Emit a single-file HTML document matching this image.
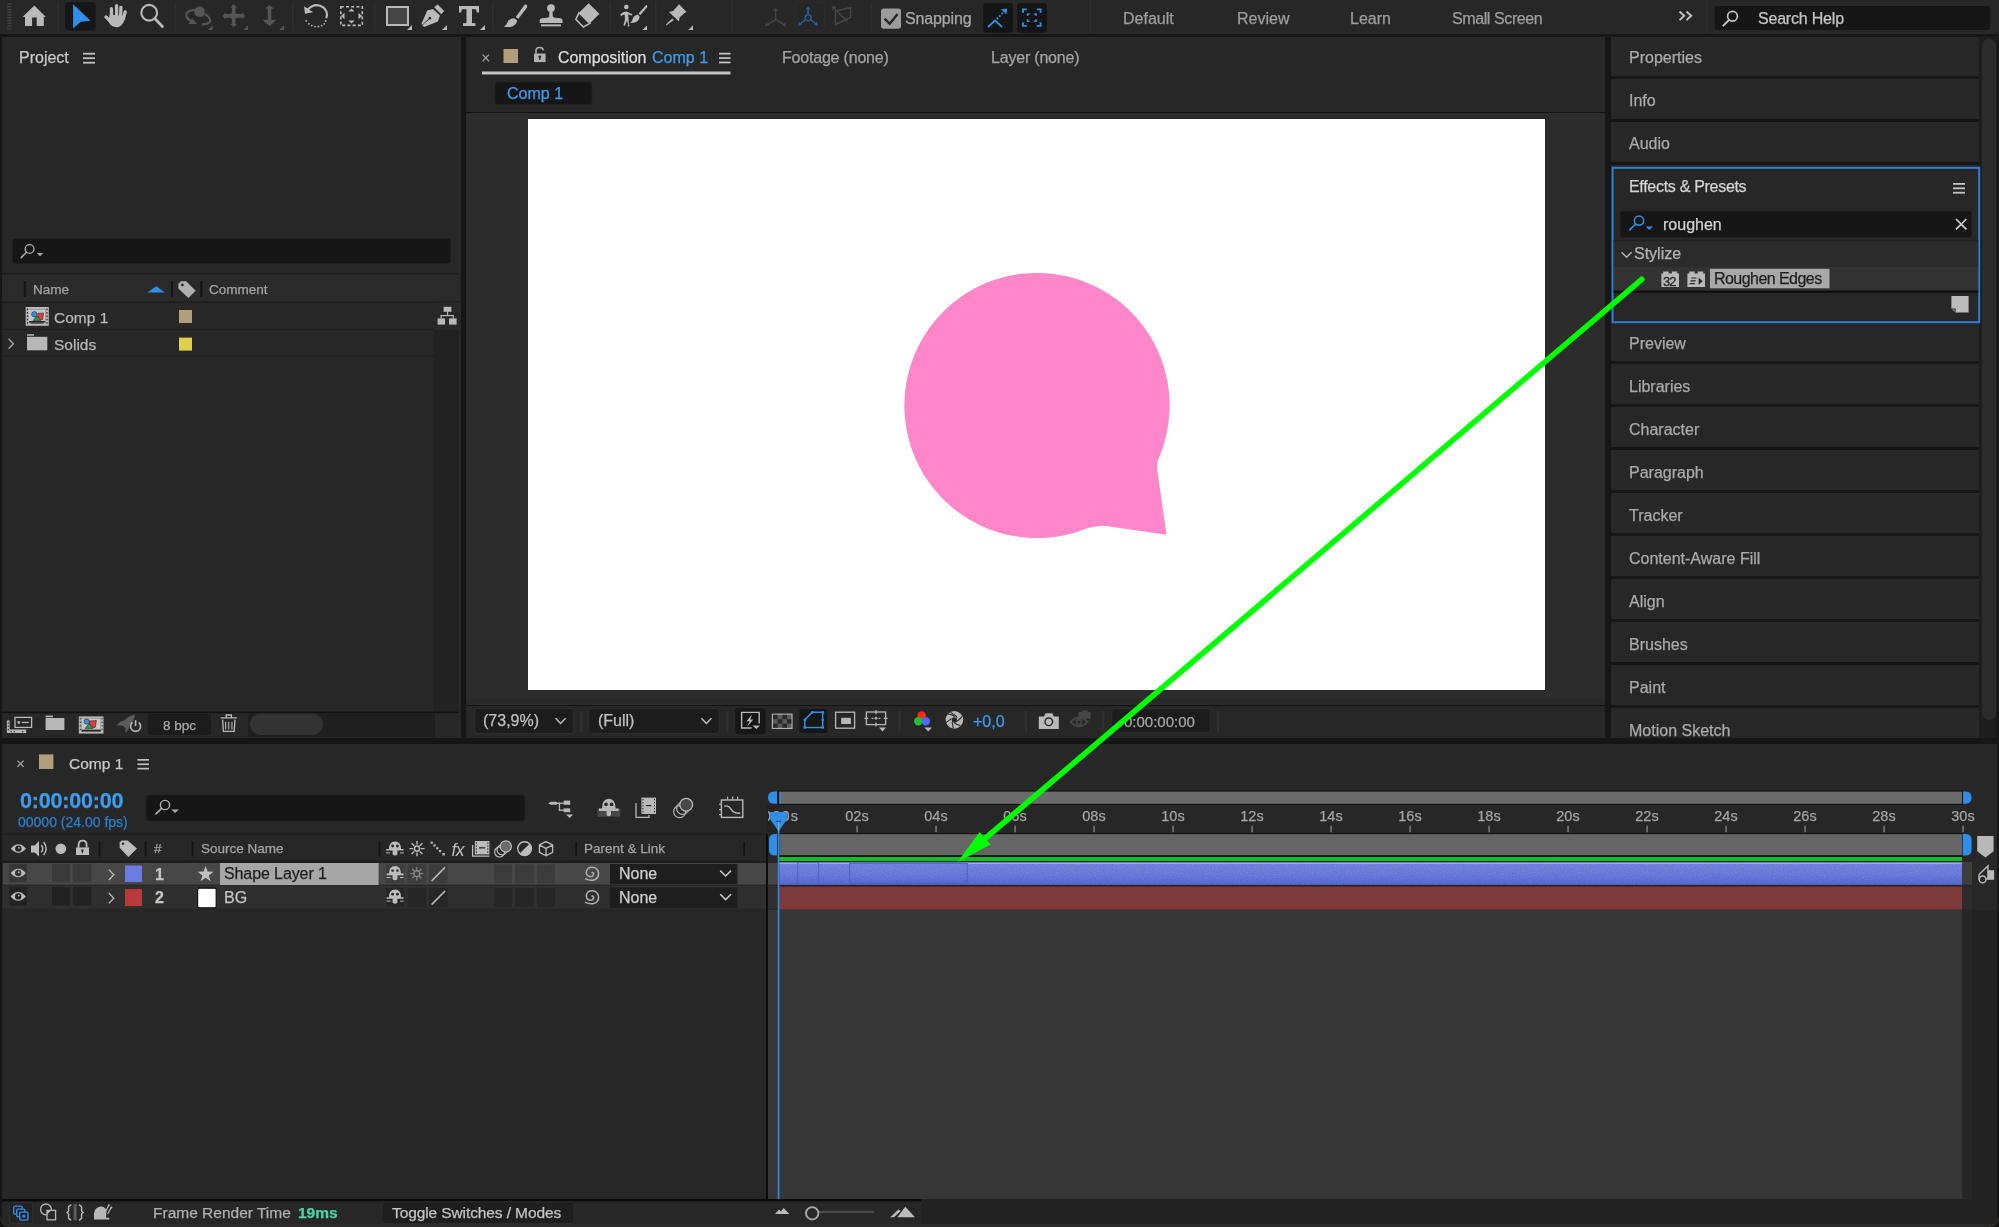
<!DOCTYPE html>
<html><head><meta charset="utf-8">
<style>
*{box-sizing:border-box;margin:0;padding:0}
html,body{width:1999px;height:1227px;overflow:hidden;background:#161616;font-family:"Liberation Sans",sans-serif;color:#b8b8b8}
.a{position:absolute}
.t{position:absolute;white-space:nowrap;line-height:1;-webkit-text-stroke:0.25px currentColor;will-change:transform}
svg{position:absolute;overflow:visible}
.sep{position:absolute;width:2px;background:#313131}
</style></head><body>
<!-- TOOLBAR -->
<div class="a" style="left:0;top:0;width:1999px;height:34px;background:#272727"></div>
<svg style="left:0;top:0" width="1999" height="34">
 <g fill="#454545"><rect x="7.2" y="3.40" width="4.3" height="1.2"/><rect x="7.2" y="6.15" width="4.3" height="1.2"/><rect x="7.2" y="8.90" width="4.3" height="1.2"/><rect x="7.2" y="11.65" width="4.3" height="1.2"/><rect x="7.2" y="14.40" width="4.3" height="1.2"/><rect x="7.2" y="17.15" width="4.3" height="1.2"/><rect x="7.2" y="19.90" width="4.3" height="1.2"/><rect x="7.2" y="22.65" width="4.3" height="1.2"/><rect x="7.2" y="25.40" width="4.3" height="1.2"/><rect x="7.2" y="28.15" width="4.3" height="1.2"/></g>
 <g fill="#2f2f2f"><rect x="57" y="2" width="1.6" height="29"/><rect x="174.5" y="2" width="1.6" height="29"/><rect x="292" y="2" width="1.6" height="29"/><rect x="374" y="2" width="1.6" height="29"/><rect x="492" y="2" width="1.6" height="29"/><rect x="609.5" y="2" width="1.6" height="29"/><rect x="655" y="2" width="1.6" height="29"/><rect x="731" y="1" width="1.6" height="31"/><rect x="870.5" y="2" width="1.6" height="29"/><rect x="1089.5" y="0" width="1.6" height="33"/><rect x="1706.5" y="0" width="1.6" height="33"/></g>
 <!-- home -->
 <path fill="#b9b9b9" d="M34.4 5.5 L45.9 17 L43.8 17 L43.8 26 L36.7 26 L36.7 17.4 L32.1 17.4 L32.1 26 L25 26 L25 17 L22.5 17 Z"/>
 <!-- select -->
 <rect x="64.6" y="1.7" width="31.4" height="29.3" rx="3.5" fill="#161616" stroke="#2c2c2c" stroke-width="0.8"/>
 <path fill="#2f8fe8" d="M73.1 4.25 L90.6 20.8 L80.8 21.7 L73.1 28.5 Z"/>
 <!-- hand -->
 <g stroke="#b9b9b9" stroke-linecap="round" fill="none">
  <path d="M111.4 8.6 L111.6 17 M116.6 5.6 L116.6 16 M120.9 7.3 L120.6 16.5 M125.2 11.9 L123.4 18.6" stroke-width="3.3"/>
  <path d="M105.9 16.9 L110.2 21.2" stroke-width="3.2"/>
 </g>
 <path d="M109.6 14.6 L125.2 16.2 Q124.6 24.6 118 27.2 Q111.2 28 108.4 21.6 Z" fill="#b9b9b9"/>
 <!-- zoom -->
 <circle cx="149.2" cy="12.75" r="7.9" fill="none" stroke="#b9b9b9" stroke-width="2.1"/>
 <line x1="154.8" y1="18.6" x2="162.4" y2="26.4" stroke="#b9b9b9" stroke-width="2.8" stroke-linecap="round"/>
 <!-- orbit (dim) -->
 <g fill="#555" stroke="#555">
  <circle cx="199.6" cy="11.7" r="5.4" stroke="none"/>
  <path d="M194.8 9.9 Q186 10.5 186.3 15 Q186.8 19.3 191.5 21" fill="none" stroke-width="2.2"/>
  <path d="M188.5 24 L197.3 24 L192 18.2 Z" stroke="none"/>
  <path d="M204.8 13.8 Q210.8 18 210.2 21 Q209.4 24.3 201.9 24.3" fill="none" stroke-width="2.2"/>
  <path d="M207.7 29.9 L212.6 29.9 L212.6 25.4 Z" stroke="none"/>
 </g>
 <!-- move (dim) -->
 <g fill="#555">
  <path d="M233.7 4.2 L237.1 7.6 L235.5 7.6 L235.5 13 L237 14.1 L242 14.1 L242 12.2 L245.1 15.9 L242 19.6 L242 17.7 L237 17.7 L235.5 18.8 L235.5 24 L237.1 24 L233.7 27 L230.3 24 L231.9 24 L231.9 18.8 L230.4 17.7 L225.4 17.7 L225.4 19.6 L222.7 15.9 L225.4 12.2 L225.4 14.1 L230.4 14.1 L231.9 13 L231.9 7.6 L230.3 7.6 Z"/>
  <path d="M243.5 29.9 L248 29.9 L248 25.4 Z"/>
 </g>
 <!-- dolly (dim) -->
 <g fill="#555">
  <path d="M269.5 4.9 L274 8.8 L271.2 8.8 L271.2 19.8 L276.6 19.8 L269.5 26.3 L262.6 19.8 L267.8 19.8 L267.8 8.8 L265.2 8.8 Z"/>
  <path d="M279.2 29.9 L284.1 29.9 L284.1 25 Z"/>
 </g>
 <!-- rotate -->
 <g>
  <path d="M306.8 10.5 Q315 1.5 323.5 7.5 Q328.5 12 326.3 18.2" fill="none" stroke="#b9b9b9" stroke-width="2.2"/>
  <path d="M304 6.2 L313.2 12.2 L305 13.8 Z" fill="#b9b9b9"/>
  <g fill="#b9b9b9"><circle cx="325.7" cy="21" r="0.9"/><circle cx="324.2" cy="23.8" r="0.9"/><circle cx="321.6" cy="25.6" r="0.9"/><circle cx="318.4" cy="26.5" r="0.9"/><circle cx="315" cy="26.6" r="0.9"/><circle cx="311.8" cy="25.6" r="0.9"/><circle cx="308.8" cy="23.8" r="0.9"/><circle cx="306.2" cy="20.8" r="0.9"/></g>
 </g>
 <!-- region -->
 <g fill="none" stroke="#b9b9b9" stroke-width="1.6" stroke-dasharray="3 2.2">
  <rect x="340.8" y="6.8" width="21.5" height="18.6"/>
 </g>
 <g fill="#b9b9b9"><path d="M351.5 8.5 L354.6 11.5 L348.4 11.5 Z"/><path d="M351.5 23.5 L354.6 20.5 L348.4 20.5 Z"/><path d="M341 16 L344.5 12.8 L344.5 19.2 Z"/><path d="M362 16 L358.5 12.8 L358.5 19.2 Z"/></g>
 <!-- rect -->
 <rect x="387" y="7" width="21" height="18" fill="#454545" stroke="#b9b9b9" stroke-width="2"/>
 <path d="M407 30 L412 30 L412 25 Z" fill="#b9b9b9"/>
 <!-- pen -->
 <g fill="#b9b9b9">
  <path d="M434.2 7.2 L437.6 4.4 L444.2 11 L441.2 14.2 Z"/>
  <path d="M433 9 L440 15.6 L437.8 21.5 L424.2 27 L422.4 25.3 L429 19.4 Q430.2 19.8 431 19 Q431.8 18 430.8 17 Q429.8 16.2 428.8 17.2 Q428.2 18 428.6 18.8 L422.2 24.8 L421.4 24 L427.2 10.6 Z"/>
  <path d="M442 30 L447 30 L447 25 Z"/>
 </g>
 <!-- T -->
 <path fill="#b9b9b9" d="M459 6 L479 6 L479 12.5 L477 12.5 L476 9.2 L472 9.2 L472 23 L475.5 23.3 L475.5 26 L463 26 L463 23.3 L466.5 23 L466.5 9.2 L462 9.2 L461 12.5 L459 12.5 Z"/>
 <path d="M480 30 L485 30 L485 25 Z" fill="#b9b9b9"/>
 <!-- brush -->
 <g fill="#b9b9b9">
  <path d="M524.5 4.8 Q527.8 3.8 527 7.4 L518.2 19 L515.8 17 Z"/>
  <path d="M514.4 18.2 L517.2 20.6 Q516.6 24.6 512.4 26.4 Q508 27.6 503.8 26.8 Q506.6 25.2 507.4 22.4 Q508.8 18.6 514.4 18.2 Z"/>
 </g>
 <!-- stamp -->
 <g fill="#b9b9b9">
  <circle cx="551" cy="8.1" r="3.9"/>
  <path d="M549.6 10.5 L552.4 10.5 L552.8 16.3 Q553 17.6 555 17.8 L560.6 18.2 Q562.5 18.6 562.5 20.2 L562.5 23 L539.7 23 L539.7 20.2 Q539.7 18.6 541.6 18.2 L547.2 17.8 Q549.2 17.6 549.2 16.3 Z"/>
  <rect x="541" y="24.4" width="20" height="1.9"/>
 </g>
 <!-- eraser -->
 <g>
  <path fill="#b9b9b9" d="M588.6 3.2 L599.4 13.8 L589.8 23.4 L579 12.8 Z"/>
  <path fill="none" stroke="#b9b9b9" stroke-width="1.6" d="M579 12.8 L589.8 23.4 L583.4 27 L575.8 19.4 Z"/>
 </g>
 <!-- roto brush -->
 <g fill="#b9b9b9">
  <circle cx="626.3" cy="7" r="2.3"/>
  <path d="M620.2 14.6 Q623.2 11.2 626.6 11.4 L632.4 14.2 L631.8 15.6 L628.2 14.4 L628.6 19.8 L629 24.4 L628 24.6 L627 20.8 L624.8 25.8 L623.4 25.2 L625 19.4 L624.6 14.6 Q622.6 14.6 621.2 16.2 Z"/>
  <path d="M646.2 5 Q648 4.6 647 7.2 L640.2 15.2 L638.6 13.6 Z"/>
  <path d="M637.8 14.6 L639.6 16.4 Q639.4 21.4 633.8 22.8 L630 23 Q632.4 21.4 632.8 18.8 Q633.6 15.6 637.8 14.6 Z"/>
  <circle cx="628.6" cy="25.6" r="1"/>
  <path d="M642.5 30 L647 30 L647 25.25 Z"/>
 </g>
 <!-- pin -->
 <g fill="#b9b9b9">
  <path d="M679 4.3 L686.5 12 L684.2 13.2 L679.6 17.6 L679 21.5 L668.9 12 L673 11 L677.4 6.2 Z"/>
  <path d="M672.2 18.4 L673.8 20 L666.4 25.4 L665.8 24.8 Z"/>
  <path d="M688.25 30 L693 30 L693 25.25 Z"/>
 </g>
</svg>


<svg style="left:0;top:0" width="1999" height="34">
 <g fill="none" stroke="#464646" stroke-width="1.5">
  <path d="M775.6 19.4 L775.6 9 M775.6 19.4 L766.5 25.6 M775.6 19.4 L785.4 25.6"/>
 </g>
 <g fill="#464646"><path d="M775.6 7.5 L778.4 10.8 L772.8 10.8 Z"/><path d="M765 26.6 L766.2 22.6 L769 25.8 Z"/><path d="M786.4 26.6 L782.2 25.8 L785 22.6 Z"/></g>
 <rect x="795.7" y="2.3" width="28.7" height="27.9" rx="3" fill="#262626" stroke="#303030" stroke-width="0.8"/>
 <g fill="none" stroke="#2b5b96" stroke-width="1.6"><circle cx="808.1" cy="17.8" r="3"/><path d="M808.1 14.8 L808.1 8 M805.5 19.5 L799.5 24.5 M810.7 19.5 L816.7 24.5"/></g>
 <g fill="#2b5b96"><path d="M808.1 6.2 L811 9.6 L805.2 9.6 Z"/><path d="M798 25.8 L799.2 21.6 L802 24.8 Z"/><path d="M818.2 25.8 L814.2 24.8 L817 21.6 Z"/></g>
 <g fill="none" stroke="#464646" stroke-width="1.5"><path d="M835.5 11 L835.5 24.5 L850.5 17.5 L850.5 7.5 Z"/><path d="M833 7 L847.5 21.5"/></g>
 <path d="M832 6.2 L836.5 6.8 L832.6 10.6 Z" fill="#464646"/>
 <rect x="881" y="8.5" width="20" height="20.2" rx="2.6" fill="#9c9c9c"/>
 <path d="M884.6 18.6 L889.8 23.8 L897.6 14" fill="none" stroke="#272727" stroke-width="2.4"/>
 <rect x="983.3" y="3" width="29.5" height="29.6" rx="3" fill="#151515"/>
 <path d="M988 27 L995 20.5 L1002 27" fill="none" stroke="#2f8fe8" stroke-width="1.8"/>
 <path d="M996.8 19 L1003.5 12.4" fill="none" stroke="#2f8fe8" stroke-width="1.8" stroke-dasharray="1.8 1.6"/>
 <path d="M1007.2 8.5 L1006.4 14.6 L1001 9.2 Z" fill="#2f8fe8"/>
 <rect x="1017" y="3" width="30" height="29.6" rx="3" fill="#151515"/>
 <g fill="none" stroke="#2f8fe8" stroke-width="1.8">
  <path d="M1023 13 L1023 9.3 L1026.8 9.3 M1036.8 9.3 L1040.6 9.3 L1040.6 13 M1040.6 22.2 L1040.6 25.8 L1036.8 25.8 M1026.8 25.8 L1023 25.8 L1023 22.2"/>
  <path d="M1027.6 16 L1027.6 14 L1029.6 14 M1034 14 L1036 14 L1036 16 M1036 19.2 L1036 21.2 L1034 21.2 M1029.6 21.2 L1027.6 21.2 L1027.6 19.2" stroke-width="1.5"/>
 </g>
 <!-- >> -->
 <g fill="none" stroke="#c4c4c4" stroke-width="1.9"><path d="M1679.5 11.5 L1684.2 15.8 L1679.5 20.1 M1686.5 11.5 L1691.2 15.8 L1686.5 20.1"/></g>
 <!-- search help -->
 <rect x="1714.6" y="6" width="275.4" height="24" rx="3" fill="#161616"/>
 <circle cx="1732.5" cy="16.3" r="4.9" fill="none" stroke="#c4c4c4" stroke-width="1.7"/>
 <line x1="1729" y1="20" x2="1723.3" y2="25.6" stroke="#c4c4c4" stroke-width="2" stroke-linecap="round"/>
</svg>
<div class="t" style="left:905px;top:11px;font-size:16px;color:#a8a8a8;letter-spacing:-0.15px">Snapping</div>
<div class="t" style="left:1123px;top:11px;font-size:16px;color:#9e9e9e">Default</div>
<div class="t" style="left:1237px;top:11px;font-size:16px;color:#9e9e9e">Review</div>
<div class="t" style="left:1350px;top:11px;font-size:16px;color:#9e9e9e">Learn</div>
<div class="t" style="left:1452px;top:11px;font-size:16px;color:#9e9e9e;letter-spacing:-0.4px">Small Screen</div>
<div class="t" style="left:1758px;top:11px;font-size:16px;color:#c4c4c4;letter-spacing:-0.2px">Search Help</div>

<!-- PROJECT PANEL -->
<div class="a" style="left:2px;top:37px;width:459px;height:701px;background:#272727"></div>
<div class="t" style="left:19px;top:50px;font-size:16px;color:#c8c8c8">Project</div>
<svg style="left:0;top:0" width="470" height="740">
 <g fill="#c0c0c0"><rect x="83" y="52.8" width="12" height="1.8"/><rect x="83" y="57.3" width="12" height="1.8"/><rect x="83" y="61.8" width="12" height="1.8"/></g>
 <!-- search -->
 <rect x="12" y="238" width="439" height="26" rx="3" fill="#161616" stroke="#2c2c2c" stroke-width="0.8"/>
 <circle cx="29.6" cy="249" r="4.4" fill="none" stroke="#a8a8a8" stroke-width="1.4"/>
 <line x1="26.4" y1="252.2" x2="21.2" y2="257.6" stroke="#a8a8a8" stroke-width="1.6" stroke-linecap="round"/>
 <path d="M36.8 253 L43.2 253 L40 256.2 Z" fill="#a8a8a8"/>
 <!-- header row -->
 <rect x="2" y="273" width="457" height="1.4" fill="#1d1d1d"/>
 <rect x="2" y="274.4" width="457" height="27.2" fill="#2a2a2a"/>
 <rect x="2" y="301.5" width="457" height="1.2" fill="#1d1d1d"/>
 <g fill="#151515"><rect x="23.8" y="281" width="2" height="16"/><rect x="171" y="281" width="2" height="16"/><rect x="200.3" y="281" width="2" height="16"/></g>
 <path d="M147.4 292.6 L156.2 286.2 L165 292.6 Z" fill="#2f8fe8"/>
 <path d="M178.4 283.8 L178.4 288.6 L188.4 298 L195.6 290.8 L186.2 281.2 L181 281.2 Z" fill="#b0b0b0"/>
 <circle cx="182.3" cy="285" r="1.4" fill="#2a2a2a"/>
 <!-- rows -->
 <rect x="2" y="328.7" width="432" height="1.1" fill="#1f1f1f"/>
 <rect x="2" y="355.5" width="432" height="1.1" fill="#1f1f1f"/>
 <rect x="434" y="302.6" width="25" height="409" fill="#222222"/>
 <rect x="434" y="302.6" width="25" height="27" fill="#282828"/>
 <!-- comp icon -->
 <g>
  <rect x="25.7" y="307" width="23.1" height="18.8" fill="#b8b8b8"/>
  <rect x="29" y="309.6" width="16.4" height="13" fill="#262626"/>
  <g fill="#262626"><rect x="26.9" y="308.6" width="1.2" height="1.6"/><rect x="26.9" y="312" width="1.2" height="1.6"/><rect x="26.9" y="315.4" width="1.2" height="1.6"/><rect x="26.9" y="318.8" width="1.2" height="1.6"/><rect x="26.9" y="322.2" width="1.2" height="1.6"/><rect x="46.4" y="308.6" width="1.2" height="1.6"/><rect x="46.4" y="312" width="1.2" height="1.6"/><rect x="46.4" y="315.4" width="1.2" height="1.6"/><rect x="46.4" y="318.8" width="1.2" height="1.6"/><rect x="46.4" y="322.2" width="1.2" height="1.6"/></g>
  <rect x="29" y="309.6" width="16.4" height="11.4" fill="#c8c8c8"/>
  <path d="M37.6 313.4 L43.6 313 L42.6 319.6 L38.6 319.6 Z" fill="#e83a3a" stroke="#262626" stroke-width="0.6"/>
  <circle cx="34.3" cy="314.3" r="2.7" fill="#3a8ef0" stroke="#262626" stroke-width="0.6"/>
  <path d="M37 315.8 L41 320.6 L33 320.6 Z" fill="#1fa03a" stroke="#262626" stroke-width="0.6"/>
  <rect x="30.6" y="322.6" width="13" height="1" fill="#262626"/>
 </g>
 <!-- folder -->
 <rect x="27" y="334.2" width="7" height="1.5" fill="#b8b8b8"/>
 <rect x="27" y="336.8" width="20.3" height="13.5" fill="#b8b8b8"/>
 <path d="M8.6 338.8 L13.4 343.8 L8.6 348.8" fill="none" stroke="#a8a8a8" stroke-width="1.3"/>
 <!-- label squares -->
 <rect x="179" y="310" width="13" height="13" fill="#b09f7a"/>
 <rect x="179" y="337.6" width="13" height="13" fill="#e0d048"/>
 <!-- flowchart -->
 <g fill="#b8b8b8"><rect x="443.6" y="306.8" width="7.8" height="5"/><rect x="437.6" y="318.4" width="7.4" height="6.2"/><rect x="449" y="318.4" width="7.6" height="6.2"/><rect x="447" y="311.6" width="1.2" height="3.6"/><rect x="440.6" y="315" width="13.2" height="1.2"/><rect x="440.6" y="315" width="1.2" height="3.6"/><rect x="452.6" y="315" width="1.2" height="3.6"/></g>
 <!-- bottom bar -->
 <rect x="2" y="711.6" width="457" height="1.6" fill="#121212"/>
 <rect x="248" y="713" width="187" height="24" fill="#1f1f1f"/>
 <rect x="250" y="713.4" width="73" height="21.6" rx="10.8" fill="#333333"/>
 <rect x="147.7" y="714" width="63.3" height="21" rx="3" fill="#1c1c1c"/>
 <!-- interpret footage icon -->
 <rect x="15" y="717.4" width="16.6" height="10" fill="#262626" stroke="#b8b8b8" stroke-width="1.3"/>
 <rect x="17.5" y="721.2" width="2.6" height="2.4" fill="#b8b8b8"/><rect x="21.9" y="721.8" width="6.9" height="1.3" fill="#b8b8b8"/>
 <path d="M6.9 720.6 L9.6 720.6 L9.6 729.4 L26.2 729.4 L26.2 733 L6.9 733 Z" fill="#b8b8b8"/>
 <g fill="#262626"><rect x="7.8" y="722.4" width="1" height="1.4"/><rect x="7.8" y="725.6" width="1" height="1.4"/><rect x="7.8" y="728.8" width="1" height="1.4"/><rect x="10.6" y="731.2" width="1.4" height="1"/><rect x="13.6" y="731.2" width="1.4" height="1"/><rect x="22" y="731.2" width="1.4" height="1"/></g>
 <rect x="45.6" y="715.6" width="7.4" height="1.6" fill="#b8b8b8"/>
 <rect x="45.6" y="718" width="18.8" height="12" fill="#b8b8b8"/>
 <g>
  <rect x="78.8" y="716.4" width="24.7" height="17.2" fill="#b8b8b8"/>
  <rect x="81.6" y="718.4" width="19.2" height="13.2" fill="#262626"/>
  <rect x="81.6" y="718.4" width="19.2" height="11.2" fill="#c8c8c8"/>
  <path d="M89 721 L96.4 720.6 L95.2 727.4 L90.4 727.4 Z" fill="#e83a3a" stroke="#262626" stroke-width="0.6"/>
  <circle cx="86.6" cy="721.6" r="2.6" fill="#3a8ef0" stroke="#262626" stroke-width="0.6"/>
  <path d="M89.2 723.4 L93.2 728.4 L85.2 728.4 Z" fill="#1fa03a" stroke="#262626" stroke-width="0.6"/>
  <g fill="#262626"><rect x="79.8" y="718" width="1" height="1.4"/><rect x="79.8" y="721.6" width="1" height="1.4"/><rect x="79.8" y="725.2" width="1" height="1.4"/><rect x="79.8" y="728.8" width="1" height="1.4"/><rect x="101.6" y="718" width="1" height="1.4"/><rect x="101.6" y="721.6" width="1" height="1.4"/><rect x="101.6" y="725.2" width="1" height="1.4"/><rect x="101.6" y="728.8" width="1" height="1.4"/></g>
 </g>
 <path d="M116.4 725.2 Q120 721 124 720.4 Q129 715.6 135 714.8 Q134.2 721 129.4 726 Q129 730 125 733 L125.8 728.6 L122.6 725.4 Z" fill="#5a5a5a"/>
 <path d="M132.6 722.4 A5 5 0 1 0 138.6 722.4" fill="none" stroke="#b8b8b8" stroke-width="1.6"/>
 <rect x="134.8" y="720.2" width="1.6" height="6" fill="#b8b8b8"/>
 <g fill="none" stroke="#b8b8b8" stroke-width="1.3">
  <path d="M220.6 717.8 L236.9 717.8 M226.2 717.8 L226.2 715 L231.4 715 L231.4 717.8 M222.6 719.6 L223.4 731.4 L234.2 731.4 L235 719.6"/>
 </g>
 <g fill="#b8b8b8"><rect x="225.1" y="721.9" width="1.1" height="7.6"/><rect x="228.2" y="721.9" width="1.1" height="7.6"/><rect x="231.4" y="721.9" width="1.1" height="7.6"/></g>
</svg>
<div class="t" style="left:33px;top:283px;font-size:13.5px;color:#a4a4a4">Name</div>
<div class="t" style="left:209px;top:283px;font-size:13.5px;color:#a4a4a4">Comment</div>
<div class="t" style="left:53.5px;top:309.5px;font-size:15.5px;color:#b8b8b8">Comp 1</div>
<div class="t" style="left:53.5px;top:336.5px;font-size:15.5px;color:#b8b8b8">Solids</div>
<div class="t" style="left:163px;top:719px;font-size:13.5px;color:#aaaaaa">8 bpc</div>


<!-- COMP PANEL -->
<div class="a" style="left:466px;top:37px;width:1139px;height:701px;background:#272727"></div>
<div class="a" style="left:466px;top:113px;width:1139px;height:592px;background:#2c2c2c"></div>
<div class="a" style="left:466px;top:111.5px;width:1139px;height:1.5px;background:#121212"></div>
<div class="a" style="left:466px;top:698px;width:1139px;height:6.6px;background:#2a2a2a"></div>
<div class="a" style="left:466px;top:704.6px;width:1139px;height:1.4px;background:#141414"></div>
<div class="a" style="left:528px;top:119px;width:1017px;height:571px;background:#ffffff"></div>
<svg style="left:0;top:0" width="1999" height="740">
 <path d="M482.6 54.6 L489 61.2 M489 54.6 L482.6 61.2" stroke="#a0a0a0" stroke-width="1.3"/>
 <rect x="503.5" y="49" width="14.5" height="14" fill="#b09f7a"/>
 <path d="M536 53.5 L536 50.8 Q536 47.6 539.6 47.6 Q543 47.6 543.2 50.4" fill="none" stroke="#b0b0b0" stroke-width="1.5"/>
 <rect x="534" y="53.5" width="11.6" height="8.6" fill="#b0b0b0"/>
 <circle cx="539.8" cy="56.8" r="1.4" fill="#272727"/><rect x="539.2" y="57" width="1.2" height="3" fill="#272727"/>
 <g fill="#c8c8c8"><rect x="719" y="52.8" width="11.5" height="1.7"/><rect x="719" y="57.2" width="11.5" height="1.7"/><rect x="719" y="61.6" width="11.5" height="1.7"/></g>
 <rect x="482" y="71.5" width="248.5" height="3" fill="#c4c4c4"/>
 <rect x="495" y="82" width="97" height="22.5" rx="3" fill="#161616" stroke="#222" stroke-width="0.8"/>
 <!-- speech bubble -->
 <path fill="#ff86c9" d="M1160 455 Q1156.2 462 1157.4 471 L1166.5 534.8 L1104 525.7 Q1096 525.4 1087 528.3 A132.6 132.6 0 1 1 1160 455 Z"/>
 <!-- viewer toolbar -->
 <rect x="474.7" y="708.3" width="98.7" height="25.2" rx="3.5" fill="#1c1c1c" stroke="#303030" stroke-width="0.8"/>
 <path d="M555.6 718.2 L560.6 723.4 L565.6 718.2" fill="none" stroke="#c0c0c0" stroke-width="1.4"/>
 <rect x="580" y="711" width="2.6" height="21" fill="#303030"/>
 <rect x="588.8" y="708.3" width="130.2" height="25.2" rx="3.5" fill="#1c1c1c" stroke="#303030" stroke-width="0.8"/>
 <path d="M701.4 718.2 L706.4 723.4 L711.4 718.2" fill="none" stroke="#c0c0c0" stroke-width="1.4"/>
 <rect x="726.2" y="711" width="2.4" height="21" fill="#303030"/>
 <rect x="735.3" y="708.2" width="30.3" height="26.1" rx="3" fill="#161616"/>
 <path d="M759.2 723.4 L759.2 712.4 L741.6 712.4 L741.6 728 L751.6 728" fill="none" stroke="#b8b8b8" stroke-width="1.4"/>
 <path d="M752 714.6 L746.4 721.2 L749.6 721.2 L747.2 726.6 L753.4 719.4 L750.2 719.4 Z" fill="#b8b8b8"/>
 <path d="M752.6 725.4 L760 725.4 L756.3 729 Z" fill="#b8b8b8"/>
 <rect x="772.4" y="714.2" width="19.6" height="14.2" fill="#5a5a5a" stroke="#b0b0b0" stroke-width="1.2"/>
 <g fill="#2a2a2a"><rect x="773" y="714.8" width="4.6" height="4.4"/><rect x="782.4" y="714.8" width="4.6" height="4.4"/><rect x="777.6" y="719.2" width="4.8" height="4.4"/><rect x="787" y="719.2" width="4.4" height="4.4"/><rect x="773" y="723.6" width="4.6" height="4.2"/><rect x="782.4" y="723.6" width="4.6" height="4.2"/></g>
 <rect x="799.3" y="709" width="28.2" height="24" rx="3" fill="#161616"/>
 <path d="M804.8 727.4 L804.8 719.9 L812.3 712.3 L822.7 712.3 L822.7 727.4 Z" fill="none" stroke="#2f8fe8" stroke-width="1.5"/>
 <g fill="#2f8fe8"><circle cx="804.8" cy="727.4" r="1.4"/><circle cx="804.8" cy="719.9" r="1.4"/><circle cx="812.3" cy="712.3" r="1.4"/><circle cx="822.7" cy="712.3" r="1.4"/><circle cx="822.7" cy="727.4" r="1.4"/><circle cx="822.7" cy="719.9" r="1.2"/></g>
 <rect x="835.6" y="712.2" width="19" height="16" fill="none" stroke="#b8b8b8" stroke-width="1.3"/>
 <rect x="841.2" y="717.8" width="9.7" height="6.2" fill="#b8b8b8"/>
 <rect x="866.4" y="712" width="19.2" height="12.6" fill="none" stroke="#b8b8b8" stroke-width="1.3"/>
 <path d="M876 710.2 L876 714.2 M876 722.4 L876 726.4 M864.4 718.3 L868.4 718.3 M883.6 718.3 L887.6 718.3 M871.6 718.3 L873.4 718.3 M878.6 718.3 L880.4 718.3" stroke="#b8b8b8" stroke-width="1.3"/>
 <path d="M874.2 718.3 L876 716.5 L877.8 718.3 L876 720.1 Z" fill="#b8b8b8"/>
 <path d="M879 727.4 L886 727.4 L882.5 731.6 Z" fill="#b8b8b8"/>
 <rect x="898.4" y="711" width="2.4" height="21" fill="#303030"/>
 <circle cx="921.7" cy="715.4" r="4.2" fill="#ff2a1a"/>
 <circle cx="918.3" cy="721.3" r="4.2" fill="#1ec22a"/>
 <circle cx="925.8" cy="721.3" r="4.2" fill="#4a6cff"/>
 <path d="M924.5 727.4 L932 727.4 L928.2 731.6 Z" fill="#b8b8b8"/>
 <circle cx="954.4" cy="719.9" r="8.8" fill="#b8b8b8"/>
 <g fill="none" stroke="#272727" stroke-width="1.1">
  <path d="M950.6 712.4 Q955.8 715.2 957.2 717.6"/><path d="M962 716.6 Q958.8 720.6 956.4 721.4"/><path d="M960.4 725.8 Q955.8 724.4 954.2 722.6"/><path d="M953.4 728.6 Q952.6 723.6 952 722"/><path d="M946 722.6 Q949.8 719.6 951.6 718.8"/><path d="M948 714 Q952.8 714.6 954.6 716.6"/>
 </g>
 <circle cx="954.4" cy="719.9" r="2.6" fill="#272727"/>
 <rect x="1024.6" y="711" width="2.4" height="21" fill="#303030"/>
 <path d="M1038.8 716.4 L1044 716.4 L1045.6 713.3 L1052.2 713.3 L1053.8 716.4 L1058.8 716.4 L1058.8 729 L1038.8 729 Z" fill="#b8b8b8"/>
 <circle cx="1048.8" cy="721.8" r="3.8" fill="none" stroke="#272727" stroke-width="1.4"/>
 <g fill="none" stroke="#464646" stroke-width="1.8"><path d="M1070.4 722 Q1079 713.5 1087.6 722 Q1079 730.5 1070.4 722 Z"/><circle cx="1079" cy="722" r="2.4"/></g>
 <path d="M1078.6 712 L1081.6 712 L1083 710.2 L1086.6 710.2 L1088 712 L1090.6 712 L1090.6 718.4 L1078.6 718.4 Z" fill="#464646"/>
 <rect x="1102" y="711" width="2.4" height="21" fill="#303030"/>
 <rect x="1111.9" y="708.9" width="98.1" height="23.7" rx="3" fill="#1c1c1c" stroke="#303030" stroke-width="0.8"/>
 <rect x="1216.8" y="711" width="2.4" height="21" fill="#303030"/>
</svg>
<div class="t" style="left:558px;top:50px;font-size:16px;color:#dedede;letter-spacing:-0.05px">Composition</div>
<div class="t" style="left:652px;top:50px;font-size:16px;color:#3d9cf0">Comp 1</div>
<div class="t" style="left:782px;top:50px;font-size:16px;color:#a4a4a4;letter-spacing:-0.2px">Footage (none)</div>
<div class="t" style="left:991px;top:50px;font-size:16px;color:#a4a4a4;letter-spacing:-0.2px">Layer (none)</div>
<div class="t" style="left:507px;top:86px;font-size:16px;color:#3d9cf0">Comp 1</div>
<div class="t" style="left:483px;top:713px;font-size:16px;color:#c0c0c0">(73,9%)</div>
<div class="t" style="left:598px;top:713px;font-size:16px;color:#c0c0c0">(Full)</div>
<div class="t" style="left:973px;top:714px;font-size:16px;color:#3d9cf0">+0,0</div>
<div class="t" style="left:1124px;top:714px;font-size:15px;color:#a8a8a8">0:00:00:00</div>

<!-- RIGHT PANELS -->
<div class="a" style="left:1611px;top:37px;width:368px;height:701px;background:#161616"></div>
<div class="a" style="left:1611px;top:37px;width:368px;height:39px;background:#272727"></div>
<div class="t" style="left:1629px;top:50px;font-size:16px;color:#aaaaaa">Properties</div>
<div class="a" style="left:1611px;top:79px;width:368px;height:40px;background:#272727"></div>
<div class="t" style="left:1629px;top:93px;font-size:16px;color:#aaaaaa">Info</div>
<div class="a" style="left:1611px;top:122px;width:368px;height:40px;background:#272727"></div>
<div class="t" style="left:1629px;top:136px;font-size:16px;color:#aaaaaa">Audio</div>
<div class="a" style="left:1611px;top:165px;width:368px;height:159px;background:#272727"></div>
<div class="a" style="left:1611px;top:324px;width:368px;height:37px;background:#272727"></div>
<div class="t" style="left:1629px;top:336px;font-size:16px;color:#aaaaaa">Preview</div>
<div class="a" style="left:1611px;top:364px;width:368px;height:40px;background:#272727"></div>
<div class="t" style="left:1629px;top:379px;font-size:16px;color:#aaaaaa">Libraries</div>
<div class="a" style="left:1611px;top:407px;width:368px;height:40px;background:#272727"></div>
<div class="t" style="left:1629px;top:422px;font-size:16px;color:#aaaaaa">Character</div>
<div class="a" style="left:1611px;top:450px;width:368px;height:40px;background:#272727"></div>
<div class="t" style="left:1629px;top:465px;font-size:16px;color:#aaaaaa">Paragraph</div>
<div class="a" style="left:1611px;top:493px;width:368px;height:40px;background:#272727"></div>
<div class="t" style="left:1629px;top:508px;font-size:16px;color:#aaaaaa">Tracker</div>
<div class="a" style="left:1611px;top:536px;width:368px;height:40px;background:#272727"></div>
<div class="t" style="left:1629px;top:551px;font-size:16px;color:#aaaaaa">Content-Aware Fill</div>
<div class="a" style="left:1611px;top:579px;width:368px;height:40px;background:#272727"></div>
<div class="t" style="left:1629px;top:594px;font-size:16px;color:#aaaaaa">Align</div>
<div class="a" style="left:1611px;top:622px;width:368px;height:40px;background:#272727"></div>
<div class="t" style="left:1629px;top:637px;font-size:16px;color:#aaaaaa">Brushes</div>
<div class="a" style="left:1611px;top:665px;width:368px;height:40px;background:#272727"></div>
<div class="t" style="left:1629px;top:680px;font-size:16px;color:#aaaaaa">Paint</div>
<div class="a" style="left:1611px;top:708px;width:368px;height:29.5px;background:#272727"></div>
<div class="t" style="left:1629px;top:723px;font-size:16px;color:#aaaaaa">Motion Sketch</div>
<div class="a" style="left:1979px;top:37px;width:18px;height:701px;background:#1d1d1d"></div>
<div class="a" style="left:1982px;top:39px;width:14px;height:681px;border-radius:7px;background:#2c2c2c"></div>

<svg style="left:0;top:0" width="1999" height="740">
 <rect x="1612.6" y="167.8" width="366.6" height="154.4" fill="none" stroke="#2d7fd6" stroke-width="2"/>
 <g fill="#c4c4c4"><rect x="1953" y="183" width="12" height="1.8"/><rect x="1953" y="187.4" width="12" height="1.8"/><rect x="1953" y="191.8" width="12" height="1.8"/></g>
 <rect x="1620" y="211" width="351.6" height="26.4" rx="3" fill="#161616" stroke="#232323" stroke-width="0.8"/>
 <circle cx="1639" cy="220.6" r="4.6" fill="none" stroke="#2f8fe8" stroke-width="1.5"/>
 <line x1="1635.6" y1="224" x2="1629.8" y2="229.8" stroke="#2f8fe8" stroke-width="1.7" stroke-linecap="round"/>
 <path d="M1645.6 226.4 L1653 226.4 L1649.3 230 Z" fill="#2f8fe8"/>
 <path d="M1956 219 L1966.4 229.4 M1966.4 219 L1956 229.4" stroke="#d0d0d0" stroke-width="1.7"/>
 <rect x="1613.6" y="240" width="364.6" height="1.4" fill="#222"/>
 <rect x="1613.6" y="241.4" width="364.6" height="25.4" fill="#2b2b2b"/>
 <path d="M1621.6 252.2 L1626.6 257.2 L1631.6 252.2" fill="none" stroke="#b8b8b8" stroke-width="1.4"/>
 <rect x="1613.6" y="266.8" width="364.6" height="24" fill="#333333"/>
 <rect x="1613.6" y="290.6" width="364.6" height="2.2" fill="#0e0e0e"/>
 <!-- 32 icon -->
 <path d="M1661.4 273.6 L1661.4 287 L1679 287 L1679 273.6 L1677.2 273.6 L1677.2 271.4 L1671.8 271.4 L1671.8 273.6 L1668.6 273.6 L1668.6 271.4 L1663.2 271.4 L1663.2 273.6 Z" fill="#b8b8b8"/>
 <text x="1663" y="286.4" font-family="Liberation Sans" font-size="13" fill="#262626" letter-spacing="-0.9" stroke="#262626" stroke-width="0.3">32</text>
 <path d="M1687.4 273.6 L1687.4 287 L1705 287 L1705 273.6 L1703.2 273.6 L1703.2 271.4 L1697.8 271.4 L1697.8 273.6 L1694.6 273.6 L1694.6 271.4 L1689.2 271.4 L1689.2 273.6 Z" fill="#b8b8b8"/>
 <g fill="#262626"><path d="M1698.6 277.6 L1702.6 281.2 L1698.6 284.8 Z"/><path d="M1691.4 277.4 L1696.6 277.4 L1696.2 278.6 L1691 278.6 Z"/><path d="M1690.6 280.2 L1695.8 280.2 L1695.4 281.4 L1690.2 281.4 Z"/><path d="M1689.8 283 L1695 283 L1694.6 284.2 L1689.4 284.2 Z"/></g>
 <rect x="1710" y="268.8" width="119.5" height="19.5" fill="#a8a8a8"/>
 <!-- new folder icon -->
 <path d="M1951.4 296 L1968.6 296 L1968.6 312.6 L1955.6 312.6 L1951.4 308.4 Z" fill="#bcbcbc"/>
 <path d="M1951.4 308.4 L1955.6 308.4 L1955.6 312.6 Z" fill="#272727"/>
 <path d="M1952.6 309.6 L1954.4 309.6 L1954.4 311.4 Z" fill="#bcbcbc"/>
</svg>
<div class="t" style="left:1629px;top:179px;font-size:16px;color:#d4d4d4;letter-spacing:-0.3px">Effects &amp; Presets</div>
<div class="t" style="left:1663px;top:217px;font-size:16px;color:#d0d0d0">roughen</div>
<div class="t" style="left:1634px;top:246px;font-size:16px;color:#b4b4b4">Stylize</div>
<div class="t" style="left:1714px;top:271px;font-size:16px;color:#1e1e1e;letter-spacing:-0.55px">Roughen Edges</div>


<!-- TIMELINE -->
<div class="a" style="left:2px;top:744px;width:1995px;height:483px;background:#272727"></div>
<div class="a" style="left:768px;top:910px;width:1194px;height:289px;background:#363636"></div><div class="a" style="left:1972px;top:910px;width:25px;height:289px;background:#222222"></div><div class="a" style="left:1962px;top:910px;width:10px;height:289px;background:#262626"></div>
<svg style="left:0;top:740" width="1999" height="487" viewBox="0 740 1999 487">
 <!-- tab -->
 <path d="M17.4 760.6 L23.6 766.8 M23.6 760.6 L17.4 766.8" stroke="#a0a0a0" stroke-width="1.3"/>
 <rect x="39" y="754.4" width="14.4" height="14.6" fill="#b09f7a"/>
 <g fill="#c0c0c0"><rect x="137.4" y="759" width="11.6" height="1.7"/><rect x="137.4" y="763.4" width="11.6" height="1.7"/><rect x="137.4" y="767.8" width="11.6" height="1.7"/></g>
 <!-- search -->
 <rect x="146" y="795" width="379" height="26" rx="3" fill="#161616" stroke="#222" stroke-width="0.8"/>
 <circle cx="165" cy="805" r="4.6" fill="none" stroke="#b0b0b0" stroke-width="1.4"/>
 <line x1="161.6" y1="808.4" x2="156" y2="813.8" stroke="#b0b0b0" stroke-width="1.6" stroke-linecap="round"/>
 <path d="M171.4 809.6 L178.8 809.6 L175.1 813 Z" fill="#b0b0b0"/>
 <!-- header icons -->
 <g fill="#b8b8b8">
  <path d="M548 803.3 L551 801.8 L557 801.8 L557 804.8 L551 804.8 Z"/>
  <rect x="557" y="802.6" width="3" height="1.4"/>
  <rect x="563.6" y="800.6" width="6.6" height="4.2"/><rect x="563.6" y="808.4" width="6.6" height="3.8"/>
  <rect x="558.8" y="802.6" width="1.3" height="8"/><rect x="558.8" y="809.6" width="5" height="1.3"/><rect x="559.6" y="802.6" width="4.2" height="1.3"/>
  <path d="M566 814.4 L573.2 814.4 L569.6 818 Z"/>
 </g>
 <rect x="597.4" y="808.4" width="22.8" height="8.4" fill="#474747"/>
 <path d="M602 808.6 Q602 799 608.8 798.8 Q615.6 799 615.6 808.6 L618.6 808.6 L618.6 811 L611 811 L611 815 Q608.8 817.6 606.6 815 L606.6 811 L599 811 L599 808.6 Z" fill="#b8b8b8"/>
 <circle cx="606" cy="804.4" r="1.8" fill="#272727"/><circle cx="611.6" cy="804.4" r="1.8" fill="#272727"/>
 <g fill="none" stroke="#b8b8b8" stroke-width="1.3"><path d="M636 803 L636 817.4 L649 817.4 L649 815"/></g>
 <rect x="641.4" y="797.6" width="14.6" height="16.4" fill="#b8b8b8"/>
 <g fill="#272727"><rect x="642.4" y="799" width="1" height="1.3"/><rect x="642.4" y="802" width="1" height="1.3"/><rect x="642.4" y="805" width="1" height="1.3"/><rect x="642.4" y="808" width="1" height="1.3"/><rect x="642.4" y="811" width="1" height="1.3"/><rect x="654" y="799" width="1" height="1.3"/><rect x="654" y="802" width="1" height="1.3"/><rect x="654" y="805" width="1" height="1.3"/><rect x="654" y="808" width="1" height="1.3"/><rect x="654" y="811" width="1" height="1.3"/><rect x="646" y="805" width="5.4" height="1.2"/><rect x="637.4" y="805" width="1" height="1.3"/><rect x="637.4" y="808.5" width="1" height="1.3"/><rect x="637.4" y="812" width="1" height="1.3"/></g>
 <g fill="none" stroke="#b8b8b8" stroke-width="1.2"><circle cx="679.6" cy="811.6" r="6"/><circle cx="682.6" cy="808.4" r="6"/></g>
 <circle cx="686.2" cy="804.8" r="6.4" fill="#474747" stroke="#b8b8b8" stroke-width="1.3"/>
 <rect x="721.4" y="800" width="21.4" height="17.4" fill="none" stroke="#b8b8b8" stroke-width="1.4"/>
 <path d="M724.2 806.4 Q728 804.6 731 809.2 Q734 814 740.2 813" fill="none" stroke="#b8b8b8" stroke-width="1.4"/>
 <g fill="#b8b8b8"><rect x="727" y="796.6" width="1.2" height="3"/><rect x="732" y="796.6" width="1.2" height="3"/><rect x="737" y="796.6" width="1.2" height="3"/><rect x="719" y="803.6" width="2.4" height="1.2"/><rect x="719" y="809" width="2.4" height="1.2"/><rect x="719" y="814" width="2.4" height="1.2"/></g>
 <!-- column header -->
 <rect x="2" y="833.6" width="765" height="1.4" fill="#1e1e1e"/>
 <rect x="2" y="860.6" width="765" height="2" fill="#1c1c1c"/>
 <path d="M10.799999999999999 848.6 Q18.4 840.0 26.0 848.6 Q18.4 857.2 10.799999999999999 848.6 Z" fill="#bcbcbc"/><circle cx="18.4" cy="848.6" r="3.2" fill="#272727"/><circle cx="19.0" cy="847.8000000000001" r="0.9" fill="#bcbcbc"/>
 <path d="M31 845.4 L34.8 845.4 L39 841 L39 856.4 L34.8 852.4 L31 852.4 Z" fill="#bcbcbc"/>
 <path d="M41.4 844.8 Q44 848.6 41.4 852.4 M43.6 842 Q48.6 848.6 43.6 855.2" fill="none" stroke="#bcbcbc" stroke-width="1.4"/>
 <circle cx="60.8" cy="848.8" r="5.3" fill="#bcbcbc"/>
 <path d="M78.6 847.6 L78.6 845 Q78.6 840.6 82.6 840.6 Q86.6 840.6 86.6 845 L86.6 847.6" fill="none" stroke="#bcbcbc" stroke-width="1.8"/>
 <rect x="76" y="847.4" width="13" height="7.6" fill="#bcbcbc"/>
 <circle cx="82.4" cy="850.4" r="1.2" fill="#272727"/><rect x="81.9" y="850.6" width="1" height="2.6" fill="#272727"/>
 <g fill="#141414"><rect x="98.6" y="841.5" width="1.8" height="15"/><rect x="144.6" y="841.5" width="1.8" height="15"/><rect x="191.6" y="841.5" width="1.8" height="15"/><rect x="378.6" y="841.5" width="1.8" height="15"/><rect x="575.2" y="841.5" width="1.8" height="15"/><rect x="743.2" y="841.5" width="1.8" height="15"/></g>
 <path d="M119.6 842.6 L119.6 847.8 L128.4 857 L137 848.4 L127.6 840.6 L121.6 840.6 Z" fill="#bcbcbc"/>
 <circle cx="123" cy="843.8" r="1.3" fill="#272727"/>
 <!-- switch header icons -->
 <g fill="#bcbcbc">
  <path d="M389 849 Q389 841.4 395 841.4 Q401 841.4 401 849 L403.6 849 L403.6 850.6 L397.4 850.6 L397.4 854.6 Q395 856.6 392.6 854.6 L392.6 850.6 L386.2 850.6 L386.2 849 Z"/>
  </g>
 <circle cx="417" cy="848.6" r="2.6" fill="none" stroke="#bcbcbc" stroke-width="1.5"/>
 <circle cx="392.6" cy="846" r="1.4" fill="#272727"/><circle cx="397.4" cy="846" r="1.4" fill="#272727"/>
 <rect x="386" y="852.4" width="4" height="1" fill="#bcbcbc"/><rect x="400" y="852.4" width="4" height="1" fill="#bcbcbc"/>
 <path d="M417 841 L417 844.6 M417 852.6 L417 856.2 M409.4 848.6 L413 848.6 M421 848.6 L424.6 848.6 M411.6 843.2 L414.2 845.8 M419.8 851.4 L422.4 854 M422.4 843.2 L419.8 845.8 M414.2 851.4 L411.6 854" stroke="#bcbcbc" stroke-width="1.4"/>
 <g fill="#bcbcbc"><rect x="430.6" y="841.6" width="2.2" height="2.2"/><rect x="433.4" y="844.4" width="2.2" height="2.2"/><rect x="436.2" y="847.2" width="2.2" height="2.2"/><rect x="439" y="850" width="2.2" height="2.2"/><rect x="442.4" y="853" width="2.4" height="2.4"/></g>
 <text x="451.4" y="855.6" font-family="Liberation Sans" font-style="italic" font-size="17.5" fill="#bcbcbc" letter-spacing="-0.6">fx</text>
 <path d="M472.6 845 L472.6 856.2 L489.4 856.2" fill="none" stroke="#bcbcbc" stroke-width="1.3"/>
 <rect x="474.8" y="841" width="14.6" height="13.4" fill="#bcbcbc"/><g fill="#272727"><rect x="475.8" y="842.4" width="1.2" height="1.3"/><rect x="475.8" y="845.4" width="1.2" height="1.3"/><rect x="475.8" y="848.4" width="1.2" height="1.3"/><rect x="475.8" y="851.4" width="1.2" height="1.3"/><rect x="487.2" y="842.4" width="1.2" height="1.3"/><rect x="487.2" y="845.4" width="1.2" height="1.3"/><rect x="487.2" y="848.4" width="1.2" height="1.3"/><rect x="487.2" y="851.4" width="1.2" height="1.3"/><rect x="479" y="847.2" width="6.2" height="1.3"/></g>
 <g fill="none" stroke="#bcbcbc" stroke-width="1.2"><circle cx="499.6" cy="852" r="5"/><circle cx="502" cy="849.8" r="5"/></g>
 <circle cx="505.8" cy="846.4" r="5.6" fill="#6a6a6a" stroke="#bcbcbc" stroke-width="1.2"/>
 <circle cx="524.6" cy="848.6" r="6.9" fill="none" stroke="#bcbcbc" stroke-width="1.4"/><path d="M519.7 853.5 A6.9 6.9 0 0 0 529.5 843.7 Z" fill="#bcbcbc"/>
 <path d="M546 841.6 L552.6 845 L552.6 852.4 L546 855.8 L539.4 852.4 L539.4 845 Z M539.4 845 L546 848.4 L552.6 845 M546 848.4 L546 855.8" fill="none" stroke="#bcbcbc" stroke-width="1.3"/>
 <!-- rows -->
 <rect x="3" y="863" width="763" height="21.6" fill="#474747"/>
 <rect x="3" y="886" width="763" height="22.6" fill="#2f2f2f"/>
 <rect x="9" y="864" width="18" height="18" fill="#363636"/>
 <rect x="9" y="887" width="18" height="18.6" fill="#222222"/>
 <path d="M10.6 873 Q18.2 864.4 25.799999999999997 873 Q18.2 881.6 10.6 873 Z" fill="#bcbcbc"/><circle cx="18.2" cy="873" r="3.2" fill="#363636"/><circle cx="18.8" cy="872.2" r="0.9" fill="#bcbcbc"/>
 <path d="M10.6 896.4 Q18.2 887.8 25.799999999999997 896.4 Q18.2 905.0 10.6 896.4 Z" fill="#bcbcbc"/><circle cx="18.2" cy="896.4" r="3.2" fill="#222222"/><circle cx="18.8" cy="895.6" r="0.9" fill="#bcbcbc"/>
 <rect x="52" y="864" width="18" height="18" fill="#3a3a3a"/><rect x="73" y="864" width="18.5" height="18" fill="#3a3a3a"/>
 <rect x="52" y="887" width="18" height="18.6" fill="#222222"/><rect x="73" y="887" width="18.5" height="18.6" fill="#222222"/>
 <path d="M108.8 869.6 L113.8 874.8 L108.8 880" fill="none" stroke="#bcbcbc" stroke-width="1.3"/>
 <path d="M108.8 893 L113.8 898.2 L108.8 903.4" fill="none" stroke="#bcbcbc" stroke-width="1.3"/>
 <rect x="125" y="865.5" width="17" height="16.5" fill="#6b7de0"/>
 <rect x="125" y="889" width="17" height="17" fill="#b83a3a"/>
 <path d="M205.6 866 L207.6 871.6 L213.6 871.8 L208.8 875.4 L210.6 881.2 L205.6 877.8 L200.6 881.2 L202.4 875.4 L197.6 871.8 L203.6 871.6 Z" fill="#c0c0c0"/>
 <rect x="197.6" y="888.2" width="18.6" height="19.6" rx="1.5" fill="#ffffff" stroke="#111" stroke-width="1.2"/>
 <rect x="220" y="863" width="158.6" height="22" fill="#a6a6a6"/>
 <!-- switches rows -->
 <g fill="#3c3c3c"><rect x="386" y="864.4" width="18.5" height="19"/><rect x="407.5" y="864.4" width="18.5" height="19"/><rect x="429" y="864.4" width="18.5" height="19"/><rect x="494" y="864.4" width="18" height="19"/><rect x="515" y="864.4" width="19" height="19"/><rect x="537" y="864.4" width="18" height="19"/></g>
 <g fill="#262626"><rect x="386" y="888" width="18.5" height="19"/><rect x="407.5" y="888" width="18.5" height="19"/><rect x="429" y="888" width="18.5" height="19"/><rect x="494" y="888" width="18" height="19"/><rect x="515" y="888" width="19" height="19"/><rect x="537" y="888" width="18" height="19"/></g>
 <g id="shy1">
  <path d="M389 873.6 Q389 866 395 866 Q401 866 401 873.6 L403.6 873.6 L403.6 875.2 L397.4 875.2 L397.4 879.2 Q395 881.2 392.6 879.2 L392.6 875.2 L386.6 875.2 L386.6 873.6 Z" fill="#bcbcbc"/>
  <circle cx="392.6" cy="870.6" r="1.4" fill="#3c3c3c"/><circle cx="397.4" cy="870.6" r="1.4" fill="#3c3c3c"/>
  <rect x="386.6" y="877" width="4" height="1" fill="#bcbcbc"/><rect x="400" y="877" width="3.6" height="1" fill="#bcbcbc"/>
 </g>
 <g>
  <path d="M389 897.2 Q389 889.6 395 889.6 Q401 889.6 401 897.2 L403.6 897.2 L403.6 898.8 L397.4 898.8 L397.4 902.8 Q395 904.8 392.6 902.8 L392.6 898.8 L386.6 898.8 L386.6 897.2 Z" fill="#bcbcbc"/>
  <circle cx="392.6" cy="894.2" r="1.4" fill="#262626"/><circle cx="397.4" cy="894.2" r="1.4" fill="#262626"/>
  <rect x="386.6" y="900.6" width="4" height="1" fill="#bcbcbc"/><rect x="400" y="900.6" width="3.6" height="1" fill="#bcbcbc"/>
 </g>
 <path d="M416.8 867 L416.8 880.4 M410.2 873.7 L423.4 873.7 M412.2 869 L421.4 878.4 M421.4 869 L412.2 878.4" stroke="#8a8a8a" stroke-width="1.1"/>
 <circle cx="416.8" cy="873.7" r="3.6" fill="#8a8a8a"/><circle cx="416.8" cy="873.7" r="2.2" fill="#3c3c3c"/>
 <path d="M431.6 881 L445 867.4" stroke="#bcbcbc" stroke-width="1.6"/>
 <path d="M431.6 904.6 L445 891" stroke="#bcbcbc" stroke-width="1.6"/>
 <g fill="none" stroke="#b0b0b0" stroke-width="1.5"><path d="M591.4 872.6 Q593.6 872.0 593.6 874.0 Q593.2 877.0 589.8 876.6 Q585.8 875.8000000000001 586.4 871.4 Q587.4 867.0 592.4 867.2 Q598.4 868.0 598.6 873.6 Q598.4 879.2 592.6 880.2 Q589 880.6 585 878.6"/><path d="M591.4 896.2 Q593.6 895.6 593.6 897.6 Q593.2 900.6 589.8 900.2 Q585.8 899.4000000000001 586.4 895.0 Q587.4 890.6 592.4 890.8000000000001 Q598.4 891.6 598.6 897.2 Q598.4 902.8000000000001 592.6 903.8000000000001 Q589 904.2 585 902.2"/></g>
 <rect x="610" y="864" width="127.4" height="20.4" fill="#1e1e1e"/>
 <rect x="610" y="887.6" width="127.4" height="20.4" fill="#1e1e1e"/>
 <path d="M720.2 870.6 L725.6 876 L731 870.6" fill="none" stroke="#c8c8c8" stroke-width="1.5"/>
 <path d="M720.2 894.2 L725.6 899.6 L731 894.2" fill="none" stroke="#c8c8c8" stroke-width="1.5"/>
 <!-- divider -->
 <rect x="766" y="834" width="2" height="365" fill="#0c0c0c"/>
 <rect x="766" y="804.5" width="12" height="29.5" fill="#222222"/>
 <!-- right: timeline -->
 <rect x="768" y="834" width="10.4" height="76" fill="#272727"/>
 <rect x="768" y="863" width="10.4" height="21.6" fill="#454545"/>
 <rect x="768" y="886" width="10.4" height="22.6" fill="#2f2f2f"/>
 <rect x="778" y="790.6" width="1185" height="14.2" fill="#0c0c0c"/>
 <rect x="779.4" y="791.6" width="1182.6" height="12.2" fill="#6b6b6b"/>
 <path d="M777 791.4 L774 791.4 Q768 791.4 768 797.6 Q768 803.8 774 803.8 L777 803.8 Z" fill="#2f8fe8"/>
 <rect x="779.4" y="791.6" width="1.4" height="12.2" fill="#2f8fe8"/>
 <path d="M1963 791.4 L1965.5 791.4 Q1971.5 791.4 1971.5 797.6 Q1971.5 803.8 1965.5 803.8 L1963 803.8 Z" fill="#2f8fe8"/>
 <rect x="856.55" y="825.8" width="1" height="6.4" fill="#a8a8a8"/><rect x="935.55" y="825.8" width="1" height="6.4" fill="#a8a8a8"/><rect x="1014.55" y="825.8" width="1" height="6.4" fill="#a8a8a8"/><rect x="1093.55" y="825.8" width="1" height="6.4" fill="#a8a8a8"/><rect x="1172.55" y="825.8" width="1" height="6.4" fill="#a8a8a8"/><rect x="1251.55" y="825.8" width="1" height="6.4" fill="#a8a8a8"/><rect x="1330.55" y="825.8" width="1" height="6.4" fill="#a8a8a8"/><rect x="1409.55" y="825.8" width="1" height="6.4" fill="#a8a8a8"/><rect x="1488.55" y="825.8" width="1" height="6.4" fill="#a8a8a8"/><rect x="1567.55" y="825.8" width="1" height="6.4" fill="#a8a8a8"/><rect x="1646.55" y="825.8" width="1" height="6.4" fill="#a8a8a8"/><rect x="1725.55" y="825.8" width="1" height="6.4" fill="#a8a8a8"/><rect x="1804.55" y="825.8" width="1" height="6.4" fill="#a8a8a8"/><rect x="1883.55" y="825.8" width="1" height="6.4" fill="#a8a8a8"/><rect x="1962.55" y="825.8" width="1" height="6.4" fill="#a8a8a8"/>
 <rect x="778" y="833.4" width="1185" height="23.6" fill="#0e0e0e"/>
 <rect x="779.4" y="834.2" width="1182.6" height="21" fill="#656565"/>
 <path d="M777 834 L775 834 Q769 834 769 840 L769 849.4 Q769 855.4 775 855.4 L777 855.4 Z" fill="#2f8fe8"/>
 <path d="M1962.6 834 L1965.6 834 Q1971.6 834 1971.6 840 L1971.6 849.4 Q1971.6 855.4 1965.6 855.4 L1962.6 855.4 Z" fill="#2f8fe8"/>
 <rect x="779.4" y="857" width="1182.6" height="4.4" fill="#12bf2a"/>
 <defs><linearGradient id="bl" x1="0" y1="0" x2="0" y2="1"><stop offset="0" stop-color="#6b7bda"/><stop offset="0.5" stop-color="#6272d6"/><stop offset="1" stop-color="#4d5fcc"/></linearGradient>
 <filter id="nz" x="0" y="0" width="100%" height="100%"><feTurbulence type="fractalNoise" baseFrequency="0.9" numOctaves="2" seed="3"/><feColorMatrix values="0 0 0 0 1  0 0 0 0 1  0 0 0 0 1  0 0 0 0.22 -0.06"/><feComposite in2="SourceGraphic" operator="in"/></filter></defs>
 <rect x="779.4" y="861.2" width="1182.6" height="1.4" fill="#221f2a"/>
 <rect x="779.4" y="862.4" width="1182.6" height="22.4" fill="url(#bl)"/>
 <rect x="779.4" y="862.4" width="1182.6" height="22.4" fill="#fff" filter="url(#nz)"/>
 <rect x="779.4" y="862.6" width="1182.6" height="1.3" fill="#a8b4f2" opacity="0.85"/>
 <g fill="none" stroke="#4d62c8" stroke-width="1"><rect x="797.6" y="862.6" width="21" height="21.4"/><rect x="849.6" y="863.4" width="117.6" height="19.8"/></g>
 <rect x="779.4" y="886.7" width="1182.6" height="22.9" fill="#7d3b3c"/>
 <rect x="1962" y="862" width="10" height="22.6" fill="#3e3e3e"/>
 <rect x="1962" y="886.7" width="10" height="22.9" fill="#2c2c2c"/>
 <!-- right column -->
 <path d="M1977.2 836 L1993.6 836 L1993.6 851.2 L1985.4 857.4 L1977.2 851.2 Z" fill="#b8b8b8"/>
 <path d="M1979 874.6 L1988 866 L1988 871 L1993.4 871 L1993.4 879 L1979 879 Z" fill="none" stroke="#b8b8b8" stroke-width="1.4"/>
 <rect x="1987.2" y="870.8" width="6.2" height="8.4" fill="#b8b8b8"/>
 <circle cx="1982.6" cy="879.4" r="3.4" fill="#272727" stroke="#b8b8b8" stroke-width="1.5"/>
 <!-- bottom bar -->
 <rect x="2" y="1199" width="919.4" height="2.4" fill="#0a0a0a"/>
 <rect x="921.4" y="1199" width="1075.6" height="24.7" fill="#222222"/>
 <rect x="2" y="1223.7" width="1995" height="3.3" fill="#2a2a2a"/>
 <rect x="9.4" y="1202.4" width="23.4" height="20.8" rx="1.5" fill="#222222" stroke="#333333" stroke-width="0.9"/>
 <g fill="#222222" stroke="#2f8fe8" stroke-width="1.4"><rect x="13.7" y="1206.1" width="8.5" height="7.9" rx="1.3"/><rect x="16.7" y="1209.1" width="8.2" height="7.7" rx="1.3"/><rect x="19.7" y="1212.1" width="8.3" height="8" rx="1.3"/></g>
 <circle cx="23.8" cy="1216.1" r="1.6" fill="#2f8fe8"/>
 <g fill="none" stroke="#b8b8b8" stroke-width="1.3"><circle cx="46" cy="1209.4" r="5.4"/><rect x="47" y="1210.4" width="8.6" height="9.4" fill="#272727"/></g>
 <path d="M47 1210.4 L51 1210.4 L47 1214.4 Z" fill="#b8b8b8"/>
 <g fill="none" stroke="#b8b8b8" stroke-width="1.4"><path d="M71.2 1204.6 L68.6 1206.6 L68.6 1211 L67 1212.4 L68.6 1213.8 L68.6 1218.4 L71.2 1220.4 M79 1204.6 L81.6 1206.6 L81.6 1211 L83.2 1212.4 L81.6 1213.8 L81.6 1218.4 L79 1220.4"/></g>
 <rect x="73.6" y="1204" width="3" height="16.4" fill="#5a5a5a"/>
 <path d="M94 1217.6 Q92.6 1208.4 100.4 1206.6 Q106.6 1206.4 106.4 1212.6 L106 1217.6 L109.4 1218 L109.4 1219.4 L94 1219.4 Z" fill="#b8b8b8"/>
 <path d="M105 1213 L108.6 1205.4 M107.6 1214 L111.2 1207.6" stroke="#b8b8b8" stroke-width="1.2"/>
 <circle cx="108.8" cy="1205.2" r="1" fill="#b8b8b8"/><circle cx="111.4" cy="1207.4" r="1" fill="#b8b8b8"/>
 <rect x="382" y="1202" width="192" height="21.6" rx="3" fill="#1e1e1e" stroke="#2e2e2e" stroke-width="0.8"/>
 <path d="M775 1214 L779 1209.6 L781 1211.6 L783.6 1208 L789.4 1214 Z" fill="#bcbcbc"/>
 <rect x="819.3" y="1210.7" width="54.7" height="2.4" fill="#4a4a4a"/>
 <circle cx="812.2" cy="1213.3" r="6.2" fill="#272727" stroke="#a8a8a8" stroke-width="1.9"/>
 <path d="M890.2 1217.2 L898.4 1209.4 L900.6 1211 L894 1217.2 Z" fill="#bcbcbc"/><path d="M897.4 1217.2 L905.2 1206.8 L915 1217.2 Z" fill="#bcbcbc"/>
</svg>
<div class="a" style="left:767.5px;top:805px;width:40px;height:22px;overflow:hidden"><div class="t" style="right:8.3px;top:4px;font-size:14.5px;color:#a4a4a4;letter-spacing:1.2px">000s</div></div><div class="t" style="left:844px;top:809px;font-size:14.5px;color:#a4a4a4;width:26px;text-align:center">02s</div><div class="t" style="left:923px;top:809px;font-size:14.5px;color:#a4a4a4;width:26px;text-align:center">04s</div><div class="t" style="left:1002px;top:809px;font-size:14.5px;color:#a4a4a4;width:26px;text-align:center">06s</div><div class="t" style="left:1081px;top:809px;font-size:14.5px;color:#a4a4a4;width:26px;text-align:center">08s</div><div class="t" style="left:1160px;top:809px;font-size:14.5px;color:#a4a4a4;width:26px;text-align:center">10s</div><div class="t" style="left:1239px;top:809px;font-size:14.5px;color:#a4a4a4;width:26px;text-align:center">12s</div><div class="t" style="left:1318px;top:809px;font-size:14.5px;color:#a4a4a4;width:26px;text-align:center">14s</div><div class="t" style="left:1397px;top:809px;font-size:14.5px;color:#a4a4a4;width:26px;text-align:center">16s</div><div class="t" style="left:1476px;top:809px;font-size:14.5px;color:#a4a4a4;width:26px;text-align:center">18s</div><div class="t" style="left:1555px;top:809px;font-size:14.5px;color:#a4a4a4;width:26px;text-align:center">20s</div><div class="t" style="left:1634px;top:809px;font-size:14.5px;color:#a4a4a4;width:26px;text-align:center">22s</div><div class="t" style="left:1713px;top:809px;font-size:14.5px;color:#a4a4a4;width:26px;text-align:center">24s</div><div class="t" style="left:1792px;top:809px;font-size:14.5px;color:#a4a4a4;width:26px;text-align:center">26s</div><div class="t" style="left:1871px;top:809px;font-size:14.5px;color:#a4a4a4;width:26px;text-align:center">28s</div><div class="t" style="left:1950px;top:809px;font-size:14.5px;color:#a4a4a4;width:26px;text-align:center">30s</div>
<svg style="left:0;top:0" width="1999" height="1227">
 <rect x="777.8" y="818" width="1.6" height="381" fill="#2f8fe8"/>
 <path d="M770 812 L787 812 L787 819 L778.6 831.4 L770 819 Z" fill="#2f8fe8"/>
 <rect x="776.4" y="820.8" width="4.4" height="1.3" rx="0.6" fill="#1e3450"/>
 <rect x="778.2" y="821.4" width="1" height="10" fill="#a6a6a6"/>
</svg>
<div class="t" style="left:69px;top:756px;font-size:15.5px;color:#c8c8c8">Comp 1</div>
<div class="t" style="left:20.3px;top:791px;font-size:21.5px;font-weight:bold;color:#3d9cf0;letter-spacing:-0.2px">0:00:00:00</div>
<div class="t" style="left:17.6px;top:815px;font-size:14px;color:#2a80d0">00000 (24.00 fps)</div>
<div class="t" style="left:200.6px;top:842px;font-size:13.5px;color:#a4a4a4">Source Name</div>
<div class="t" style="left:153.5px;top:842px;font-size:13.5px;color:#a4a4a4">#</div>
<div class="t" style="left:584px;top:842px;font-size:13.5px;color:#a4a4a4">Parent &amp; Link</div>
<div class="t" style="left:155px;top:867px;font-size:16px;font-weight:bold;color:#c4c4c4">1</div>
<div class="t" style="left:155px;top:890px;font-size:16px;font-weight:bold;color:#c4c4c4">2</div>
<div class="t" style="left:223.5px;top:866px;font-size:16px;color:#1e1e1e;letter-spacing:-0.1px">Shape Layer 1</div>
<div class="t" style="left:223.5px;top:890px;font-size:16px;color:#c4c4c4">BG</div>
<div class="t" style="left:619px;top:866px;font-size:16px;color:#d0d0d0">None</div>
<div class="t" style="left:619px;top:890px;font-size:16px;color:#d0d0d0">None</div>
<div class="t" style="left:153px;top:1205px;font-size:15.5px;color:#b0b0b0">Frame Render Time</div>
<div class="t" style="left:298px;top:1205px;font-size:15.5px;font-weight:bold;color:#4fd2a8">19ms</div>
<div class="t" style="left:392px;top:1205px;font-size:15.5px;color:#c4c4c4;letter-spacing:-0.1px">Toggle Switches / Modes</div>



<svg style="left:0;top:0" width="1999" height="1227">
 <path d="M0 1227 L0 1217.5 A9.5 9.5 0 0 0 9.5 1227 Z" fill="#17130f"/>
 <path d="M1999 1227 L1999 1217.5 A9.5 9.5 0 0 1 1989.5 1227 Z" fill="#17130f"/>
 <path d="M0.6 1217.5 A9 9 0 0 0 9.5 1226.4" fill="none" stroke="#383838" stroke-width="0.9"/>
 <path d="M1998.4 1217.5 A9 9 0 0 1 1989.5 1226.4" fill="none" stroke="#383838" stroke-width="0.9"/>
</svg>
<!-- GREEN ARROW -->
<svg style="left:0;top:0" width="1999" height="1227">
 <line x1="1641.8" y1="279.3" x2="982" y2="841.2" stroke="#00ff00" stroke-width="5.6" stroke-linecap="round"/>
 <path d="M957.3 862.3 L979.6 832 L990.6 844.6 Z" fill="#00ff00"/>
</svg>
</body></html>
